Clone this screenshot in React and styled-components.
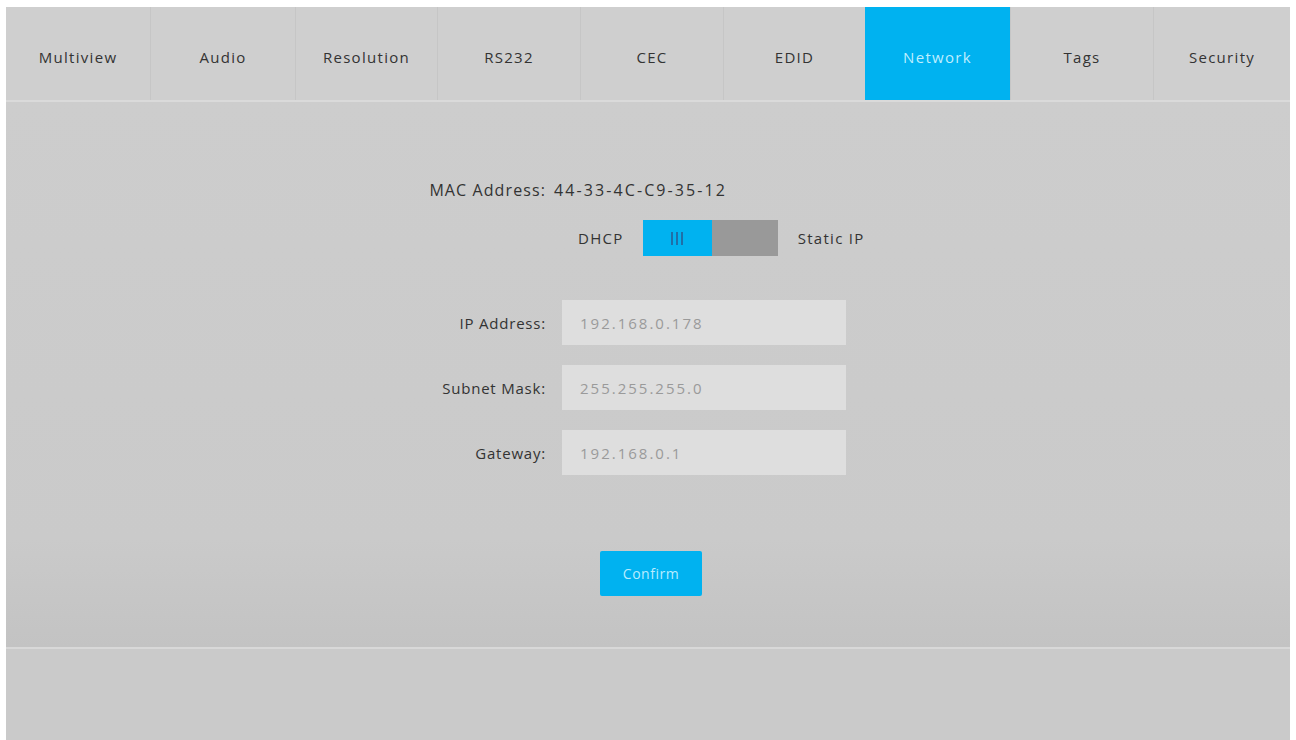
import React from 'react';
import styled, {createGlobalStyle} from 'styled-components';

const blue = "#00b2f0";

const GlobalStyle = createGlobalStyle`
  html, body {
    margin: 0;
    background: #ffffff;
    font-family: "Open Sans", "DejaVu Sans", sans-serif;
  }
`;

const Page = styled.div`
  width: 1296px;
  height: 740px;
  padding: 7px 6px 0 6px;
  box-sizing: border-box;
  overflow: hidden;
`;

const Panel = styled.div`
  display: flex;
  flex-direction: column;
  height: 100%;
  background: #cbcbcb;
`;

const TabBar = styled.div`
  display: grid;
  grid-template-columns: 144px 145px 142px 143px 143px 142px 145px 143px 1fr;
  height: 93px;
  background: #cfcfcf;
  border-bottom: 2px solid #dadada;
`;

const Tab = styled.div`
  display: flex;
  align-items: center;
  justify-content: center;
  font-size: 15px;
  letter-spacing: 1.3px;
  color: ${p => p.active ? '#bfeeff' : '#333'};
  background: ${p => p.active ? blue : 'transparent'};
  border-left: ${p => p.first || p.active ? 'none' : '1px solid #c6c6c6'};
  padding-top: 7px;
`;

const Content = styled.div`
  display: flex;
  flex-direction: column;
  height: 547px;
  padding-top: 77px;
  box-sizing: border-box;
  background: linear-gradient(#cdcdcd 0%, #cacaca 80%, #c3c3c3 100%);
  border-bottom: 2px solid #d8d8d8;
`;

const MacRow = styled.div`
  display: flex;
  align-items: center;
  gap: 8px;
  font-size: 16px;
  color: #333;
`;

const MacLabel = styled.span`
  width: 540px;
  text-align: right;
  letter-spacing: 1.1px;
`;

const MacValue = styled.span`
  letter-spacing: 2.1px;
`;

const ModeRow = styled.div`
  display: flex;
  align-items: center;
  margin-top: 19px;
  padding-left: 572px;
  font-size: 15px;
  letter-spacing: 1.3px;
  color: #333;
`;

const Switch = styled.div`
  display: flex;
  width: 135px;
  height: 36px;
  margin: 0 20px 0 19px;
`;

const Knob = styled.div`
  flex: 0 0 69px;
  display: flex;
  align-items: center;
  justify-content: center;
  gap: 3px;
  background: ${blue};
`;

const Grip = styled.span`
  width: 2px;
  height: 13px;
  background: #1f6fa8;
`;

const Track = styled.div`
  flex: 1;
  background: #999999;
`;

const Fields = styled.div`
  display: grid;
  grid-template-columns: 540px 284px;
  column-gap: 16px;
  row-gap: 20px;
  align-items: center;
  margin-top: 44px;
`;

const FieldLabel = styled.label`
  text-align: right;
  font-size: 15px;
  letter-spacing: 0.8px;
  color: #333;
`;

const Field = styled.div`
  height: 45px;
  display: flex;
  align-items: center;
  padding-left: 18px;
  background: #dedede;
  font-size: 15px;
  letter-spacing: 2px;
  color: #9a9a9a;
`;

const ButtonBox = styled.div`
  display: flex;
  justify-content: center;
  margin-top: 76px;
  padding-left: 6px;
`;

const Confirm = styled.button`
  width: 102px;
  height: 45px;
  border: none;
  border-radius: 2px;
  background: ${blue};
  color: #b8ecff;
  font-family: inherit;
  font-size: 14px;
  letter-spacing: 0.5px;
`;

const Footer = styled.div`
  flex: 1;
  background: #cacaca;
`;

const tabs = ["Multiview", "Audio", "Resolution", "RS232", "CEC", "EDID", "Network", "Tags", "Security"];

const fields = [
    ["IP Address:", "192.168.0.178"],
    ["Subnet Mask:", "255.255.255.0"],
    ["Gateway:", "192.168.0.1"],
];

export default function App() {
    return (
        <Page>
            <GlobalStyle/>
            <Panel>
                <TabBar>
                    {tabs.map((t, i) =>
                        <Tab key={t} first={i === 0} active={t === "Network"}>{t}</Tab>
                    )}
                </TabBar>
                <Content>
                    <MacRow>
                        <MacLabel>MAC Address:</MacLabel>
                        <MacValue>44-33-4C-C9-35-12</MacValue>
                    </MacRow>
                    <ModeRow>
                        DHCP
                        <Switch>
                            <Knob><Grip/><Grip/><Grip/></Knob>
                            <Track/>
                        </Switch>
                        Static IP
                    </ModeRow>
                    <Fields>
                        {fields.map(([label, value]) => (
                            <React.Fragment key={label}>
                                <FieldLabel>{label}</FieldLabel>
                                <Field>{value}</Field>
                            </React.Fragment>
                        ))}
                    </Fields>
                    <ButtonBox>
                        <Confirm>Confirm</Confirm>
                    </ButtonBox>
                </Content>
                <Footer/>
            </Panel>
        </Page>
    );
}
